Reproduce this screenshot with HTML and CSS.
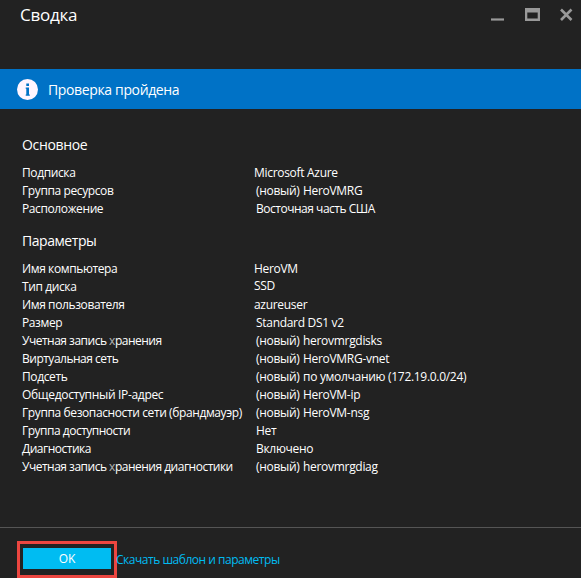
FILE: index.html
```html
<!DOCTYPE html>
<html lang="ru">
<head>
<meta charset="utf-8">
<title>Сводка</title>
<link rel="stylesheet" href="styles.css">
</head>
<body>
<div class="blade">
  <header class="titlebar">
    <h1>Сводка</h1>
    <svg class="controls" width="84" height="16" viewBox="0 0 84 16" aria-hidden="true">
      <path class="bar" d="M1 10.400h13v2.200H1z"/>
      <path class="bar" fill-rule="evenodd" d="M35 0h15v13H35zM37.300 4.500v6h10.400v-6z"/>
      <path class="cross" d="M71 1.500l10.500 10.500M81.500 1.500l-10.500 10.500"/>
    </svg>
  </header>
  <div class="banner">
    <svg width="21" height="21" viewBox="0 0 21 21" aria-hidden="true">
      <circle cx="10.500" cy="10.500" r="10.500" fill="#fff5ff"/>
      <path fill="#0072c6" d="M9.300 4.500h2.700v2.500H9.300zM8.700 8.500H12v7h.8v1.300H8.700v-1.300h.6v-5.700h-.6z"/>
    </svg>
    <span>Проверка пройдена</span>
  </div>
  <main class="content">
    <h2 class="h-basics">Основное</h2>
    <dl>
      <dt>Подписка</dt><dd class="out">Microsoft Azure</dd>
      <dt>Группа ресурсов</dt><dd><span class="new">(новый)</span>HeroVMRG</dd>
      <dt>Расположение</dt><dd class="tight">Восточная часть США</dd>
    </dl>
    <h2 class="h-params">Параметры</h2>
    <dl>
      <dt>Имя компьютера</dt><dd class="out">HeroVM</dd>
      <dt>Тип диска</dt><dd class="out up">SSD</dd>
      <dt>Имя пользователя</dt><dd class="out">azureuser</dd>
      <dt>Размер</dt><dd>Standard DS1 v2</dd>
      <dt class="tight">Учетная запись <span class="thin">х</span>ранения</dt><dd><span class="new">(новый)</span>herovmrgdisks</dd>
      <dt class="tight">Виртуальная сеть</dt><dd><span class="new">(новый)</span>HeroVMRG-vnet</dd>
      <dt>Подсеть</dt><dd><span class="new">(новый)</span>по умолчанию (172.19.0.0/24)</dd>
      <dt class="wide">Общедоступный IP-адрес</dt><dd><span class="new">(новый)</span>HeroVM-ip</dd>
      <dt>Группа безопасности сети (брандмауэр)</dt><dd><span class="new">(новый)</span>HeroVM-nsg</dd>
      <dt class="tight">Группа доступности</dt><dd>Нет</dd>
      <dt class="tight">Диагностика</dt><dd>Включено</dd>
      <dt class="tight">Учетная запись <span class="thin">х</span>ранения диагностики</dt><dd><span class="new">(новый)</span>herovmrgdiag</dd>
    </dl>
  </main>
  <footer class="footer">
    <div class="highlight"><button type="button">OK</button></div>
    <a>Скачать шаблон и параметры</a>
  </footer>
</div>
</body>
</html>
```
FILE: styles.css
```css
* { box-sizing: border-box; }
body {
  margin: 0;
  background: #222;
  color: #fff;
  font: 12px/18px "Open Sans", "Noto Sans", sans-serif;
}
h1, h2, dl, dd { margin: 0; font-weight: 400; }
.blade { display: flex; flex-direction: column; height: 578px; overflow: hidden; }
.titlebar {
  display: flex;
  justify-content: space-between;
  height: 69px;
  padding: 3px 7px 0 20px;
}
.titlebar h1 { font-size: 17px; line-height: 24px; letter-spacing: -0.25px; }
.controls { margin-top: 5px; }
.bar { fill: #999; }
.cross { fill: none; stroke: #999; stroke-width: 2.6; }
.banner {
  display: flex;
  align-items: center;
  gap: 10px;
  height: 40px;
  padding: 0 17px;
  background: #0072c6;
  font-size: 14px;
  letter-spacing: -0.36px;
}
.banner svg { margin-top: 1px; }
.banner span { padding-top: 1px; }
.content { flex: 1; padding: 26px 22px 0; }
h2 { font-size: 14px; line-height: 20px; letter-spacing: -0.35px; margin-bottom: 9px; }
.h-params { margin-top: 13px; letter-spacing: -0.45px; }
dl {
  display: grid;
  grid-template-columns: 234px 1fr;
  grid-auto-rows: 18px;
  white-space: nowrap;
  letter-spacing: -0.3px;
}
dt { letter-spacing: -0.39px; }
dt.wide { letter-spacing: -0.32px; }
.tight { letter-spacing: -0.48px; }
dt.tight { letter-spacing: -0.5px; }
.out { margin-left: -2px; }
.up { margin-top: -1px; }
.new { display: inline-block; width: 47px; }
.thin { opacity: .65; }
.footer {
  display: flex;
  height: 51px;
  border-top: 1px solid #555;
  padding: 13px 17px 0;
}
.highlight {
  width: 100px;
  height: 37px;
  padding: 4px 3px 0;
  border: 3px solid #ec4640;
}
.highlight button {
  display: block;
  width: 88px;
  height: 21px;
  padding: 1px 0 0;
  border: 0;
  background: #00bcf2;
  color: #fff;
  font: inherit;
  line-height: 20px;
}
.footer a {
  margin-left: -1px;
  padding-top: 10px;
  color: #00bcf2;
  white-space: nowrap;
  letter-spacing: -0.48px;
}
```
